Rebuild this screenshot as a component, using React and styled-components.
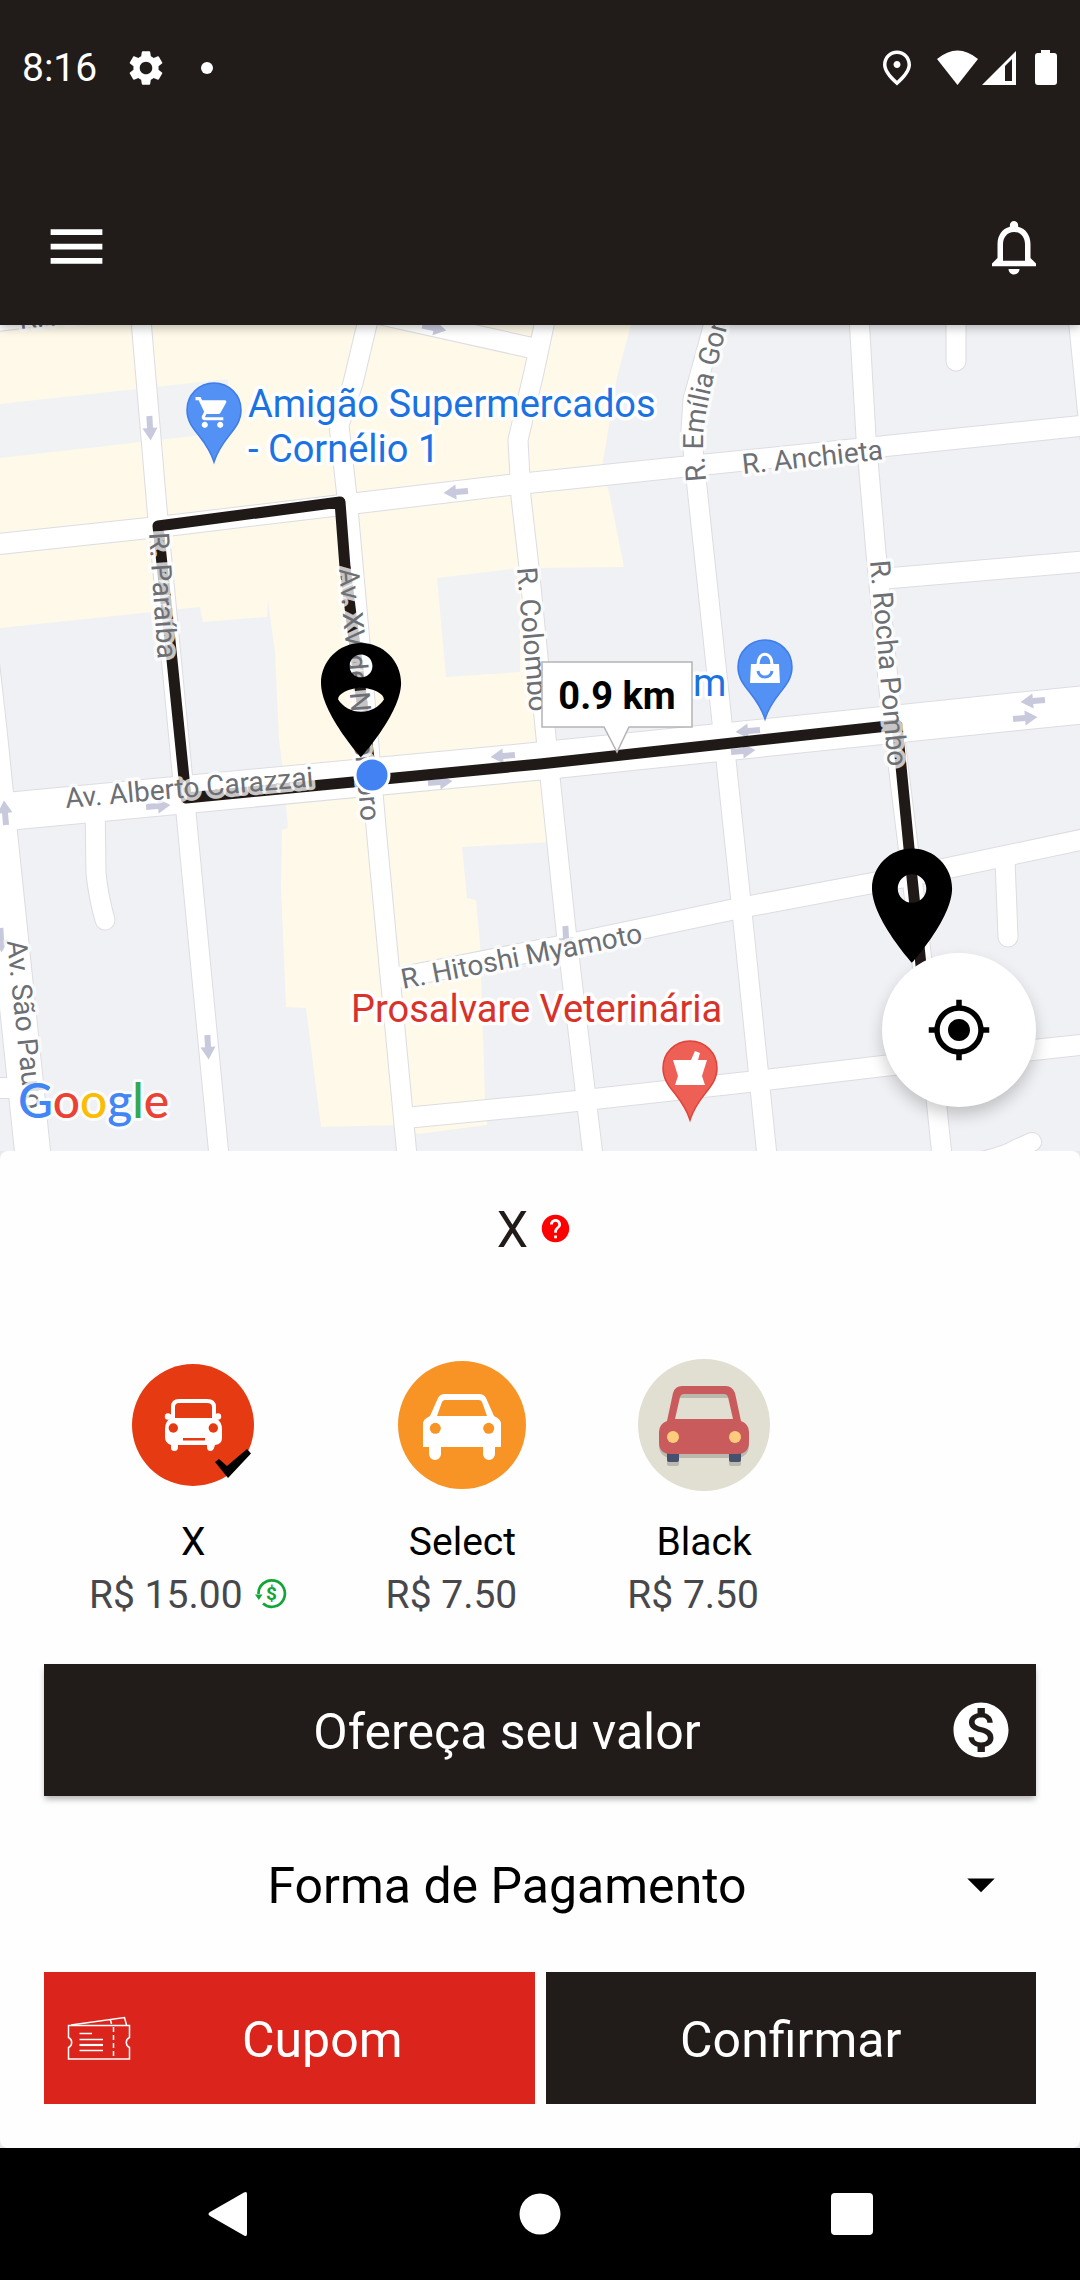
import React, { useState } from "react";
import styled, { createGlobalStyle, ThemeProvider } from "styled-components";
import {
  MdArrowDropDown,
  MdHelp,
  MdMenu,
  MdMonetizationOn,
  MdMyLocation,
  MdNotificationsNone,
  MdOutlinePlace,
  MdSettings,
  MdShoppingCart,
} from "react-icons/md";

const theme = {
  color: {
    dark: "#211b19",
    red: "#da241c",
    black: "#000000",
    white: "#ffffff",
    panel: "#fefefe",
    price: "#48484c",
    help: "#ff0000",
    green: "#12a537",
  },
  fontSize: {
    medium: "39px",
    large: "50px",
  },
  gutter: "44px",
  rowHeight: "132px",
};

const GlobalStyle = createGlobalStyle`
  * {
    box-sizing: border-box;
  }

  body {
    margin: 0;
    font-family: Roboto, "Liberation Sans", sans-serif;
    background-color: #e8e9ec;
  }

  button, select {
    margin: 0;
    padding: 0;
    border: none;
    border-radius: 0;
    font-family: inherit;
    cursor: pointer;
  }

  svg {
    display: block;
    flex-shrink: 0;
  }
`;

const Page = styled.div`
  display: flex;
  flex-direction: column;
  min-height: 100vh;
`;

const Header = styled.header`
  position: relative;
  z-index: 1;
  color: ${({ theme }) => theme.color.white};
  background-color: ${({ theme }) => theme.color.dark};
  box-shadow: 0 2px 10px rgba(0, 0, 0, 0.3);
`;

const StatusBar = styled.div`
  display: flex;
  justify-content: space-between;
  align-items: center;
  height: 136px;
  padding: 0 22px;
  font-size: ${({ theme }) => theme.fontSize.medium};
`;

const StatusGroup = styled.div`
  display: flex;
  align-items: center;
  gap: ${({ gap }) => gap}px;
`;

const NoticeDot = styled.span`
  width: 12px;
  height: 12px;
  margin-left: 6px;
  border-radius: 50%;
  background-color: currentColor;
`;

const AppBar = styled.div`
  display: flex;
  justify-content: space-between;
  align-items: center;
  height: 189px;
  padding: 32px 33px 0 42px;
`;

const IconButton = styled.button`
  display: flex;
  color: inherit;
  background: none;
`;

const MapContainer = styled.main`
  position: relative;
  display: flex;
  flex: 1 0 auto;
`;

const MapCanvas = styled.svg`
  flex: 1;
  width: 100%;
  min-width: 0;
  background-color: #f0f1f4;
`;

const StreetLabel = styled.text`
  font-size: 28px;
  fill: #6c6f74;
  stroke: rgba(255, 255, 255, 0.75);
  stroke-width: 7px;
  stroke-linejoin: round;
  paint-order: stroke;
`;

const PlaceLabel = styled.text`
  font-size: 38px;
  fill: ${({ $color }) => $color};
  stroke: #ffffff;
  stroke-width: 7px;
  stroke-linejoin: round;
  paint-order: stroke;
`;

const DistanceLabel = styled.text`
  font-size: 38px;
  font-weight: bold;
  text-anchor: middle;
`;

const GoogleMark = styled.text`
  font-family: Lato, "Liberation Sans", sans-serif;
  font-size: 48px;
  font-weight: 500;
  stroke: rgba(255, 255, 255, 0.8);
  stroke-width: 6px;
  stroke-linejoin: round;
  paint-order: stroke;
`;

const LocateButton = styled.button`
  position: absolute;
  right: 44px;
  bottom: 44px;
  display: flex;
  justify-content: center;
  align-items: center;
  width: 154px;
  height: 154px;
  && {
    border-radius: 50%;
  }
  background-color: ${({ theme }) => theme.color.white};
  box-shadow: 0 8px 16px rgba(0, 0, 0, 0.2);
`;

const Panel = styled.form`
  padding: 49px ${({ theme }) => theme.gutter} ${({ theme }) => theme.gutter};
  border-radius: 8px;
  background-color: ${({ theme }) => theme.color.panel};
`;

const PanelTitle = styled.h1`
  display: flex;
  justify-content: center;
  align-items: center;
  margin: 0 0 99px;
  font-size: ${({ theme }) => theme.fontSize.large};
  font-weight: normal;
  line-height: 60px;
  color: ${({ theme }) => theme.color.dark};
`;

const HelpButton = styled(IconButton)`
  && {
    margin: 0 11px 4px;
  }
  color: ${({ theme }) => theme.color.help};
`;

const CategoryList = styled.fieldset`
  display: flex;
  min-width: 0;
  margin: 0 0 42px;
  padding: 0 0 0 1px;
  border: none;
`;

const CategoryOption = styled.label`
  display: flex;
  flex-direction: column;
  align-items: center;
  padding: 0 44px;
  font-size: ${({ theme }) => theme.fontSize.medium};
  line-height: 53px;
  cursor: pointer;
`;

const CategoryRadio = styled.input`
  position: absolute;
  opacity: 0;
  pointer-events: none;
`;

const CategoryName = styled.span`
  margin-top: 25px;
`;

const CategoryPrice = styled.span`
  display: flex;
  align-items: center;
  color: ${({ theme }) => theme.color.price};
  white-space: nowrap;
`;

const PriceNote = styled.span`
  margin: 0 11px 4px;
`;

const Actions = styled.div`
  display: flex;
  flex-direction: column;
  gap: 22px;
`;

const ActionButton = styled.button`
  display: flex;
  flex: 1;
  align-items: center;
  min-width: 0;
  height: ${({ theme }) => theme.rowHeight};
  && {
    padding: 0 22px;
  }
  font-size: ${({ theme }) => theme.fontSize.large};
  color: ${({ theme }) => theme.color.white};
  background-color: ${({ theme, $alternate }) => $alternate ? theme.color.red : theme.color.dark};
`;

const OfferButton = styled(ActionButton)`
  flex: none;
  box-shadow: 0 4px 6px -1px rgba(33, 27, 25, 0.35);
`;

const ActionText = styled.span`
  flex: 1;
  padding-top: 4px;
  text-align: center;
`;

const PaymentField = styled.div`
  position: relative;
  display: flex;
`;

const PaymentSelect = styled.select`
  width: 100%;
  height: ${({ theme }) => theme.rowHeight};
  && {
    padding: 4px 88px 0 22px;
  }
  appearance: none;
  font-size: ${({ theme }) => theme.fontSize.large};
  color: ${({ theme }) => theme.color.black};
  text-align: center;
  text-align-last: center;
  background: none;
`;

const PaymentArrow = styled(MdArrowDropDown)`
  position: absolute;
  top: 33px;
  right: 22px;
  pointer-events: none;
`;

const ButtonRow = styled.div`
  display: flex;
  gap: 11px;
`;

const NavigationBar = styled.nav`
  display: grid;
  grid-template-columns: repeat(3, 1fr);
  justify-items: center;
  align-items: center;
  height: ${({ theme }) => theme.rowHeight};
  padding: 0 72px;
  color: ${({ theme }) => theme.color.white};
  background-color: ${({ theme }) => theme.color.black};
`;

const commercialAreas = [
  "M0 325H631L617 377L602 467L609 492L624 567L540 568L550 777V842L462 847L467 898L476 900L480 943L485 1100L487 1125L418 1134L400 1125L321 1127L306 1008L286 1007L281 887L282 830L288 828L282 762L279 740L275 653L268 600L267 617L203 622L200 607L0 628Z",
];

const plainAreas = [
  "M0 404L228 379V432L0 458Z",
  "M437 578L520 568V672L446 677Z",
];

const roads = [
  { d: "M141 320L158 520L186 813L219 1156", width: 19 },
  { d: "M369 316L353 383L339 425L347 497L360 643L376 827L407 1156", width: 19 },
  { d: "M546 316L534 372L518 440L521 497L529 567L550 777L566 930L593 1156", width: 19 },
  { d: "M716 316L693 400L691 430L697 487L722 722L741 902L767 1156", width: 19 },
  { d: "M859 316L866 437L876 553L889 690L902 797L920 943L942 1156", width: 19 },
  { d: "M1078 316L1090 437", width: 19 },
  { d: "M-20 650L-11 730L-1 828L33 1156", width: 35 },
  { d: "M-10 545L158 527L358 503L509 485L681 467L876 447L1090 425", width: 20 },
  { d: "M-10 322L70 312", width: 20 },
  { d: "M370 312L532 348", width: 20 },
  { d: "M880 579L1090 561", width: 20 },
  { d: "M-10 813L540 761L1090 704", width: 37 },
  { d: "M392 979L560 946L745 907L910 876L1090 838", width: 20 },
  { d: "M405 1118L540 1105L748 1082L883 1066L1090 1044", width: 20 },
  { d: "M-10 1088H20", width: 20 },
  { d: "M95 800L96 873Q98 895 105 920", width: 19 },
  { d: "M956 300V361", width: 19 },
  { d: "M1005 860L1008 937", width: 19 },
  { d: "M930 1170Q1000 1160 1016 1149L1032 1142", width: 18 },
];

const arrows = [
  [150, 428, 87],
  [434, 328, 12],
  [456, 492, 175],
  [748, 731, 175],
  [743, 751, -5],
  [1033, 701, 175],
  [1025, 718, -5],
  [5, 813, -95],
  [158, 806, -5],
  [208, 1047, 87],
  [503, 756, 175],
  [440, 782, -5],
  [1, 940, 87],
  [566, 938, 87],
];

const streets = [
  { name: "R. Am", x: 20, y: 329, angle: -6 },
  { name: "R. Anchieta", x: 743, y: 474, angle: -6 },
  { name: "R. Paraíba", x: 149, y: 533, angle: 86 },
  { name: "Av. XV de Novembro", x: 339, y: 569, angle: 85 },
  { name: "R. Colombo", x: 517, y: 568, angle: 85 },
  { name: "R. Rocha Pombo", x: 870, y: 561, angle: 85 },
  { name: "Av. Alberto Carazzai", x: 66, y: 808, angle: -5 },
  { name: "Av. São Paulo", x: 7, y: 941, angle: 84 },
  { name: "R. Hitoshi Myamoto", x: 403, y: 989, angle: -11 },
];

const googleLetters = [
  ["G", "#4285f4"],
  ["o", "#ea4335"],
  ["o", "#fbbc05"],
  ["g", "#4285f4"],
  ["l", "#34a853"],
  ["e", "#ea4335"],
];

const PlacePin = ({ x, y, color, border, children }) => (
  <g transform={`translate(${x} ${y})`}>
    <path
      d="M0-27C-15-27-27-15-27 0C-27 20-8 26 0 52C8 26 27 20 27 0C27-15 15-27 0-27Z"
      fill={color}
      stroke={border}
      strokeWidth="1.5"
    />
    {children}
  </g>
);

const RouteMap = () => (
  <MapCanvas viewBox="0 325 1080 826" preserveAspectRatio="xMidYMid slice" role="img" aria-label="Mapa do trajeto">
    <g fill="#fef9e9">
      {commercialAreas.map((d) => <path key={d} d={d} />)}
    </g>
    <g fill="#f0f2f4">
      {plainAreas.map((d) => <path key={d} d={d} />)}
    </g>
    <g fill="none" stroke="#dcdde2" strokeLinecap="round" strokeLinejoin="round">
      {roads.map(({ d, width }) => <path key={d} d={d} strokeWidth={width + 2} />)}
    </g>
    <g fill="none" stroke="#ffffff" strokeLinecap="round" strokeLinejoin="round">
      {roads.map(({ d, width }) => <path key={d} d={d} strokeWidth={width} />)}
    </g>
    <g fill="#c9c9de">
      {arrows.map(([x, y, angle]) => (
        <path key={`${x}-${y}`} d="M-12-3H0V-7.5L12.5 0L0 7.5V3H-12Z" transform={`translate(${x} ${y}) rotate(${angle})`} />
      ))}
    </g>

    <path
      d="M345 567L340 502L158 526L172 660L186 798L540 764L897 725L909 848L922 975"
      fill="none"
      stroke="#1f1a18"
      strokeWidth="11"
      strokeLinejoin="round"
      strokeLinecap="round"
    />
    <path d="M345 567L371 775" fill="none" stroke="#1f1a18" strokeWidth="11" />

    {streets.map(({ name, x, y, angle }) => (
      <StreetLabel key={name} transform={`translate(${x} ${y}) rotate(${angle})`}>{name}</StreetLabel>
    ))}
    <path id="emilia" d="M706 481L703 442Q703 420 715 372L750 240" fill="none" />
    <StreetLabel><textPath href="#emilia">R. Emília Gomes</textPath></StreetLabel>

    <PlaceLabel x="248" y="417" $color="#1a73e0">Amigão Supermercados</PlaceLabel>
    <PlaceLabel x="248" y="462" $color="#1a73e0">- Cornélio 1</PlaceLabel>
    <PlaceLabel x="693" y="696" $color="#1a73e0">m</PlaceLabel>
    <PlaceLabel x="351" y="1022" $color="#d8322a">Prosalvare Veterinária</PlaceLabel>

    <PlacePin x={214} y={410} color="#5491f5" border="#3f7de8">
      <MdShoppingCart x="-20" y="-16" size={37} color="#ffffff" />
    </PlacePin>
    <PlacePin x={765} y={667} color="#5491f5" border="#3f7de8">
      <path d="M-14-3H14L15 16H-15Z" fill="#ffffff" />
      <path d="M-7-3C-7-16 7-16 7-3" fill="none" stroke="#ffffff" strokeWidth="3" />
      <path d="M-7 4C-6 12 6 12 7 4" fill="none" stroke="#5491f5" strokeWidth="3" />
    </PlacePin>
    <PlacePin x={690} y={1068} color="#ee5f56" border="#e04338">
      <path d="M-17-8H1L5-17L10-15L8-8H17L12 8L15 17H-15L-12 8Z" fill="#ffffff" />
    </PlacePin>

    <path
      d="M12 2C8.14 2 5 5.14 5 9c0 5.25 7 13 7 13s7-7.75 7-13c0-3.86-3.14-7-7-7zm0 2c1.1 0 2 .9 2 2 0 1.11-.9 2-2 2s-2-.89-2-2c0-1.1.9-2 2-2zm0 10c-1.67 0-3.14-.85-4-2.15.02-1.32 2.67-2.05 4-2.05s3.98.73 4 2.05c-.86 1.3-2.33 2.15-4 2.15z"
      transform="translate(292.4 631.6) scale(5.72)"
    />
    <path
      d="M12 2C8.13 2 5 5.13 5 9c0 5.25 7 13 7 13s7-7.75 7-13c0-3.87-3.13-7-7-7zm0 9.500c-1.380 0-2.500-1.120-2.500-2.500s1.120-2.500 2.500-2.500 2.500 1.120 2.500 2.500-1.120 2.500-2.500 2.500z"
      transform="translate(843.4 837) scale(5.72)"
    />
    <circle cx="372" cy="775" r="17" fill="#4282f2" stroke="#ffffff" strokeWidth="3" />

    <path d="M542 662H692V727H629L617 752L604 727H542Z" fill="#ffffff" stroke="#b4b4b8" strokeWidth="1.5" />
    <DistanceLabel x="617" y="709">0.9 km</DistanceLabel>

    <GoogleMark x="18" y="1118">
      {googleLetters.map(([letter, color], index) => <tspan key={index} fill={color}>{letter}</tspan>)}
    </GoogleMark>
  </MapCanvas>
);

const SmallCar = () => (
  <svg width="132" height="132" viewBox="0 0 132 132">
    <circle cx="66" cy="66" r="61" fill="#e63a12" />
    <path d="M46 61V48Q46 42 52 42H80Q87 42 87 48V61" fill="none" stroke="#ffffff" strokeWidth="4" />
    <path d="M44 59H89Q95 63 95 70V79Q95 85 88 86L87 89Q86 92 83.500 92Q80 92 80 88V86H51V88Q51 92 47.500 92Q44 92 44 89V86Q38 84 38 78V70Q38 62 44 59Z" fill="#ffffff" />
    <circle cx="41" cy="57.500" r="3.200" fill="#ffffff" />
    <circle cx="91" cy="57.500" r="3.200" fill="#ffffff" />
    <circle cx="46.300" cy="69" r="4.700" fill="#e63a12" />
    <circle cx="86.300" cy="69" r="4.700" fill="#e63a12" />
    <rect x="56" y="79" width="22" height="2.500" fill="#e63a12" />
  </svg>
);

const WideCar = () => (
  <svg width="132" height="132" viewBox="0 0 132 132">
    <circle cx="66" cy="66" r="64" fill="#f79425" />
    <path
      d="M27 88V65Q27 60 34 57L42 39Q44 35 49 35H83Q88 35 90 39L98 57Q105 60 105 65V88H99V95A6 6 0 0 1 87 95V88H45V95A6 6 0 0 1 33 95V88ZM41 57H91L86 43Q85 41 83 41H49Q47 41 46 43Z"
      fill="#ffffff"
      fillRule="evenodd"
    />
    <circle cx="39.300" cy="69.300" r="5.500" fill="#f79425" />
    <circle cx="92.700" cy="69.300" r="5.500" fill="#f79425" />
  </svg>
);

const ClassicCar = () => (
  <svg width="132" height="132" viewBox="0 0 132 132">
    <circle cx="66" cy="66" r="66" fill="#e1dfd1" />
    <g fill="#bab9ae">
      <rect x="21" y="64" width="90" height="35" rx="12" />
      <rect x="29" y="96" width="12" height="11" rx="2" />
      <rect x="91" y="96" width="12" height="11" rx="2" />
      <path d="M42 35H90V39H42Z" />
    </g>
    <g fill="#46506f">
      <rect x="29" y="92" width="12" height="11" rx="2" />
      <rect x="91" y="92" width="12" height="11" rx="2" />
    </g>
    <path
      d="M29 62L35 34Q37 27 44 27H88Q94 27 97 34L103 62Q111 65 111 73V83Q111 95 99 95H33Q21 95 21 83V73Q21 65 29 62ZM37 60H95L90 38Q89 35 86 35H46Q43 35 42 38Z"
      fill="#c95b5c"
      fillRule="evenodd"
    />
    <circle cx="35" cy="78" r="6" fill="#fccb7c" />
    <circle cx="97" cy="78" r="6" fill="#fccb7c" />
  </svg>
);

const CategoryPicture = styled.span`
  position: relative;
`;

const SelectedMark = styled.svg`
  position: absolute;
  top: 90px;
  left: 88px;
`;

const SurgeIcon = () => (
  <svg width="33" height="33" viewBox="0 0 33 33">
    <path d="M4.500 17A13.200 13.200 0 1 1 9 26.500" fill="none" stroke="#12a537" strokeWidth="2.700" />
    <path d="M1 17.500H8.500L4.800 23Z" fill="#12a537" />
    <text x="17.500" y="23" fontSize="19" fontWeight="bold" textAnchor="middle" fill="#12a537">$</text>
  </svg>
);

const TicketIcon = () => (
  <svg width="66" height="66" viewBox="0 0 66 66" fill="none" stroke="#ffffff" strokeWidth="1.500">
    <path d="M2.500 20.500H63.500V32.500A5.500 5.500 0 0 0 63.500 42.500V54H2.500V42.500A5.500 5.500 0 0 0 2.500 32.500Z" />
    <path d="M5 20L58.500 12.500L60.500 20M44.500 15L45.500 19" />
    <path d="M13.500 28.500H26M13.500 34.500H37M13.500 45.500H37" />
    <path d="M13.500 40H37" strokeWidth="2.200" />
    <path d="M47.500 22V54" strokeDasharray="5 3" />
  </svg>
);

const categories = [
  { id: "x", name: "X", price: "R$ 15.00", surge: true, picture: SmallCar },
  { id: "select", name: "Select", price: "R$ 7.50", surge: false, picture: WideCar },
  { id: "black", name: "Black", price: "R$ 7.50", surge: false, picture: ClassicCar },
];

const App = () => {
  const [selected, setSelected] = useState("x");
  const current = categories.find(({ id }) => id === selected);

  const renderCategories = categories.map(({ id, name, price, surge, picture: Picture }) => (
    <CategoryOption key={id}>
      <CategoryRadio type="radio" name="category" value={id} checked={selected === id} onChange={() => setSelected(id)} />
      <CategoryPicture>
        <Picture />
        {selected === id ? (
          <SelectedMark width="36" height="30" viewBox="0 0 36 30">
            <path d="M0 13L4 10L12 17L32 0L36 4.500L13 29Z" />
          </SelectedMark>
        ) : null}
      </CategoryPicture>
      <CategoryName>{name}</CategoryName>
      <CategoryPrice>
        {price}
        <PriceNote>{surge ? <SurgeIcon /> : null}</PriceNote>
      </CategoryPrice>
    </CategoryOption>
  ));

  return (
    <ThemeProvider theme={theme}>
      <GlobalStyle />
      <Page>
        <Header>
          <StatusBar>
            <StatusGroup gap={28}>
              <span>8:16</span>
              <MdSettings size={42} />
              <NoticeDot />
            </StatusGroup>
            <StatusGroup gap={0}>
              <MdOutlinePlace size={42} />
              <svg width="140" height="42" viewBox="0 0 140 42" fill="currentColor">
                <path d="M19 12Q39.500-5 60 12L39.500 38Z" />
                <path d="M64 38L98 4V38ZM87 19V34H94V12Z" fillRule="evenodd" />
                <path d="M123 3H132V6H136Q139 6 139 9V35Q139 38 136 38H120Q117 38 117 35V9Q117 6 120 6H123Z" />
              </svg>
            </StatusGroup>
          </StatusBar>
          <AppBar>
            <IconButton type="button" aria-label="Menu"><MdMenu size={69} /></IconButton>
            <IconButton type="button" aria-label="Notificações"><MdNotificationsNone size={66} /></IconButton>
          </AppBar>
        </Header>

        <MapContainer>
          <RouteMap />
          <LocateButton type="button" aria-label="Minha localização"><MdMyLocation size={66} /></LocateButton>
        </MapContainer>

        <Panel onSubmit={(event) => event.preventDefault()}>
          <PanelTitle>
            {current.name}
            <HelpButton type="button" aria-label="Ajuda"><MdHelp size={33} /></HelpButton>
          </PanelTitle>
          <CategoryList aria-label="Categoria">{renderCategories}</CategoryList>
          <Actions>
            <OfferButton type="button">
              <ActionText>Ofereça seu valor</ActionText>
              <MdMonetizationOn size={66} />
            </OfferButton>
            <PaymentField>
              <PaymentSelect aria-label="Forma de Pagamento" defaultValue="">
                <option value="">Forma de Pagamento</option>
                <option value="cash">Dinheiro</option>
                <option value="card">Cartão</option>
              </PaymentSelect>
              <PaymentArrow size={66} />
            </PaymentField>
            <ButtonRow>
              <ActionButton type="button" $alternate>
                <TicketIcon />
                <ActionText>Cupom</ActionText>
              </ActionButton>
              <ActionButton type="submit">
                <ActionText>Confirmar</ActionText>
              </ActionButton>
            </ButtonRow>
          </Actions>
        </Panel>

        <NavigationBar>
          <IconButton type="button" aria-label="Voltar">
            <svg width="40" height="46" viewBox="0 0 40 46" fill="currentColor">
              <path d="M36 1.500Q39 0 39 3V43Q39 46 36 44.500L2 25Q-1 23 2 21Z" />
            </svg>
          </IconButton>
          <IconButton type="button" aria-label="Início">
            <svg width="42" height="42" viewBox="0 0 42 42" fill="currentColor">
              <circle cx="21" cy="21" r="20.500" />
            </svg>
          </IconButton>
          <IconButton type="button" aria-label="Recentes">
            <svg width="42" height="42" viewBox="0 0 42 42" fill="currentColor">
              <rect width="42" height="42" rx="4" />
            </svg>
          </IconButton>
        </NavigationBar>
      </Page>
    </ThemeProvider>
  );
};

export default App;
